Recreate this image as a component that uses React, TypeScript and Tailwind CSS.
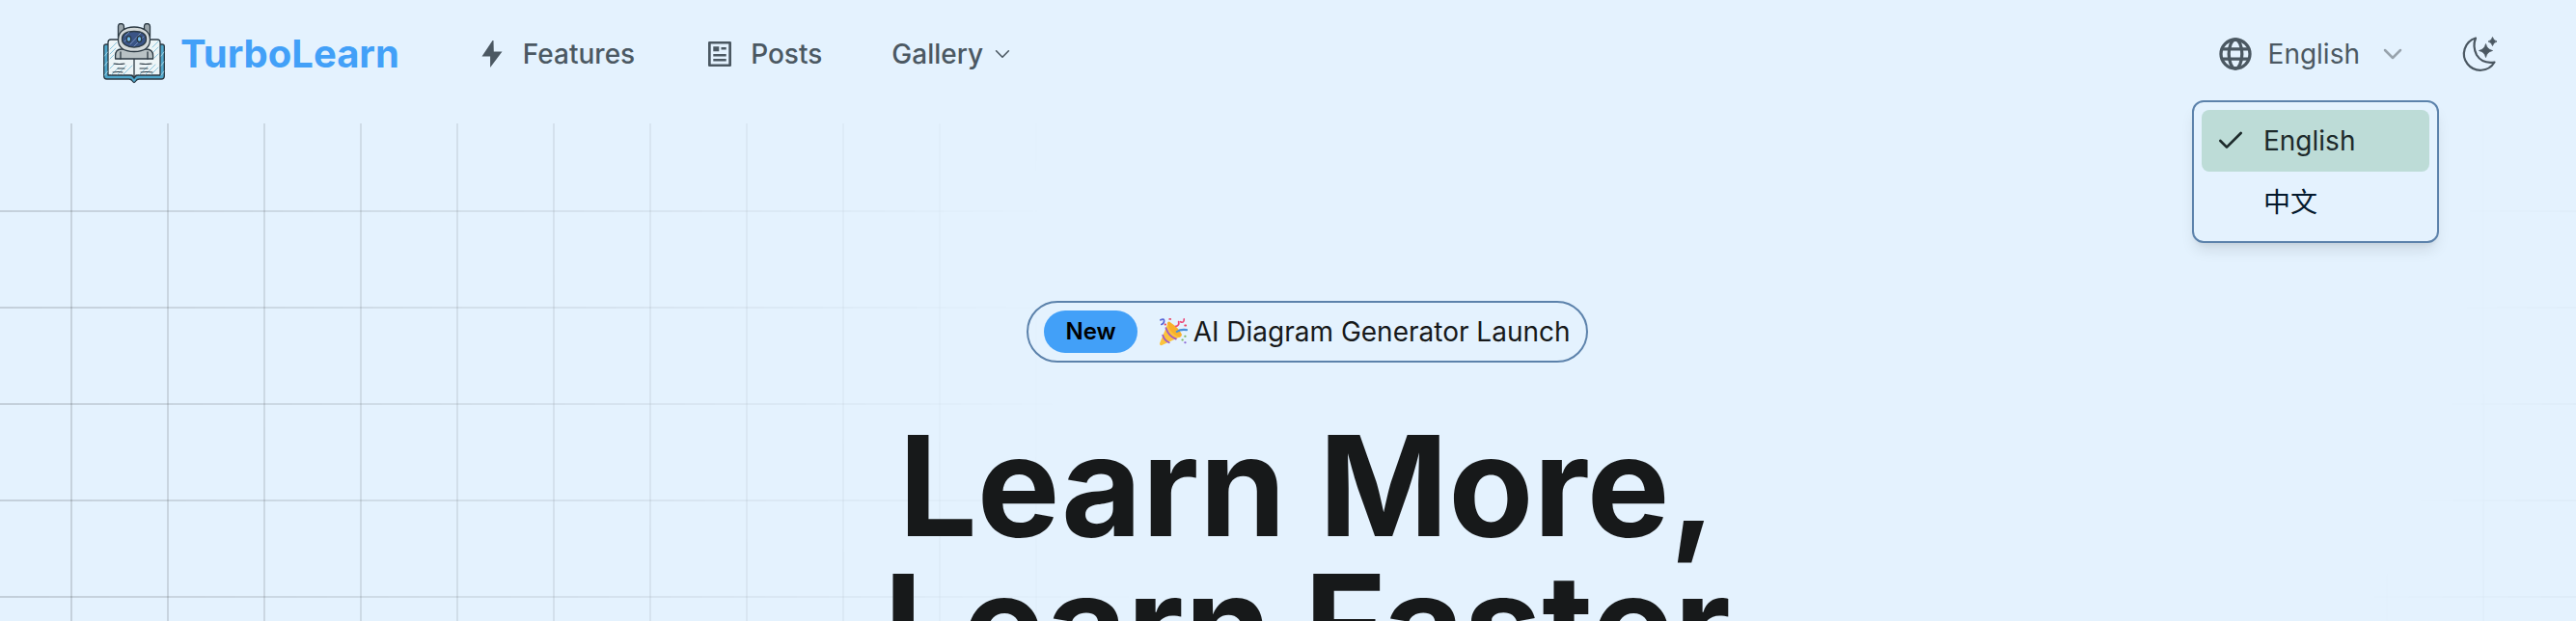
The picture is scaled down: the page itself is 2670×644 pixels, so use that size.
import React from "react";
import { Check } from "lucide-react";

function RobotLogo() {
  return (
    <svg viewBox="0 0 64 64" className="size-16" aria-hidden="true" fill="none" stroke="#2b3943" strokeWidth="1.3" strokeLinejoin="round" strokeLinecap="round">
      <path d="M3 22q-2.300 0-2.300 2v31q0 3 3 3h23q2.500 0 3.500 2 1.800 3 3.600 0 1-2 3.500-2h23q3 0 3-3V24q0-2-2.300-2z" fill="#4fa6ca" />
      <path d="M5 20q0-3 3-3h48q3 0 3 3v34H36q-3 0-4 3-1-3-4-3H5z" fill="#edf5f7" />
      <g stroke="#8cc6de" strokeWidth="1">
        <path d="M7 27l7-7M7 32l6-6M7 37l4-4M9 53l7-7M15 53l9-9M21 53l9-9M38 53l8-8M44 53l10-10M50 53l7-7M51 25l6-6M52 30l5-5M53 36l4-4M7 47l5-5" />
      </g>
      <path d="M1.500 34l3-4M1.500 44l3-4M1.500 54l3-4M60 34l3-4M60 44l3-4M60 54l3-4" stroke="#b4dbe9" strokeWidth="0.800" />
      <path d="M32 37v19" />
      <path d="M12.600 37v-3q0-7 6-7h26q7 0 7 7v3z" fill="#b9c2c5" />
      <path d="M18 30v7M46 30v7" />
      <path d="M15.500 15V3.500q0-3 3-3t3 3V10zM42.500 10V3.500q0-3 3-3t3 3V15z" fill="#9aa5ab" />
      <path d="M32 4C42 4 48.500 9 48.500 17S43 29.500 32 29.500 15.500 25 15.500 17 22 4 32 4z" fill="#d3d9da" />
      <path d="M32 8.500c8 0 12.500 2.500 12.500 8S39 25 32 25s-12.500-3-12.500-8.500S24 8.500 32 8.500z" fill="#3a5486" />
      <path d="M23 13l4-4M28 22l11-12M32 24l10-10M22 19l2-2" stroke="#7c96be" strokeWidth="0.900" />
      <ellipse cx="26.500" cy="16.500" rx="2.200" ry="3" fill="#75bff0" />
      <ellipse cx="37.500" cy="16.500" rx="2.200" ry="3" fill="#75bff0" />
      <path d="M11 42q6 1 11 0M15 47h7M10 51q6-1 10 0M38 42q6 1 12 0M38 47h8M39 51q6-1 12 0M30 54l2 3 2-3" strokeWidth="1.100" />
    </svg>
  );
}

function BoltIcon() {
  return (
    <svg viewBox="0 0 32 32" className="size-8" aria-hidden="true" fill="currentColor">
      <path d="M16.500 2 5.500 18.500h8.600V30L26.500 13.600h-8.700L17.500 2z" />
    </svg>
  );
}

function PostIcon() {
  return (
    <svg viewBox="0 0 32 32" className="size-8" aria-hidden="true" fill="currentColor">
      <path fillRule="evenodd" d="M5.300 3h21.400Q28 3 28 4.300v23.400q0 1.300-1.300 1.300H5.300Q4 29 4 27.700V4.300Q4 3 5.300 3zm1.400 2.600v20.800h18.600V5.600z" />
      <path d="M9.300 8.300h6v5h-6zM17.500 9h5.200v2.500h-5.200zM9.300 16h13.400v2.600H9.300zM9.300 21h13.400v2.600H9.300z" />
    </svg>
  );
}

function GlobeIcon() {
  return (
    <svg viewBox="0 0 36 36" className="size-9" aria-hidden="true" fill="none" stroke="currentColor" strokeWidth="3.300">
      <circle cx="18" cy="18" r="15" />
      <ellipse cx="18" cy="18" rx="6.800" ry="15" />
      <path d="M4 12.800h28M4 23.200h28" />
    </svg>
  );
}

function MoonIcon() {
  return (
    <svg viewBox="0 0 40 40" className="size-10" aria-hidden="true">
      <path d="M16 3.500A17 17 0 1 0 35.500 28.500Q23 30.500 17 21 12.500 12 16 3.500z" fill="none" stroke="currentColor" strokeWidth="2.200" strokeLinejoin="round" />
      <path d="M26.500 9.500Q27.700 15.300 33.500 16.500 27.700 17.700 26.500 23.500 25.300 17.700 19.500 16.500 25.300 15.300 26.500 9.500zM33.500 2.500Q34.400 6.100 38 7 34.400 7.900 33.500 11.500 32.600 7.900 29 7 32.600 6.100 33.500 2.500z" fill="currentColor" stroke="currentColor" strokeWidth="0.800" strokeLinejoin="round" />
    </svg>
  );
}

function PartyIcon() {
  return (
    <svg viewBox="0 0 32 32" className="h-8 w-[30px]" aria-hidden="true" fill="none" strokeLinecap="round">
      <path d="M10 7 1 29q0 2.500 2.500 2L25 21Q14 18 10 7z" fill="#fcc33c" />
      <path d="M9.500 7Q10 3 13.500 6q9 6 12 13 0 3-3 3Q12 18 9.500 7z" fill="#f8b02b" />
      <path d="M8 12q3 9 11 12M4.500 20q2 6 7 8" stroke="#a35bbd" strokeWidth="2" />
      <path d="M2 3q4-2 4 1t-3 4" stroke="#5967d8" strokeWidth="1.800" />
      <path d="M19 10q4-1 3-5M24 5q4 2 4-3" stroke="#ec4b7b" strokeWidth="1.800" />
      <path d="M20 16q4-3 11-2" stroke="#4a90d9" strokeWidth="2.200" />
      <path d="M12 2h1M29 9h1M7 8h.5" stroke="#e94b6a" strokeWidth="2" />
      <path d="M26 25h.5M29 21h.5" stroke="#7bb661" strokeWidth="2" />
      <path d="M29 28h.5" stroke="#8d6bd8" strokeWidth="2" />
    </svg>
  );
}

function Chevron({ className }: { className: string }) {
  return (
    <svg viewBox="0 0 20 12" className={className} aria-hidden="true" fill="none" stroke="currentColor" strokeLinecap="round" strokeLinejoin="round">
      <path d="M2 2l8 8 8-8" />
    </svg>
  );
}

const languages = [
  { code: "en", label: "English", selected: true },
  { code: "zh", label: "中文", selected: false },
];

export default function App() {
  return (
    <div className="flex h-screen flex-col overflow-hidden bg-[#e4f2fe] font-['Inter','Noto_Sans_CJK_SC',sans-serif] text-[#17191a]">
      <header className="flex h-32 shrink-0 items-start justify-between pr-20 pl-[107px] text-[28px] leading-8 text-[#4b5862]">
        <div className="flex h-28 items-center">
          <a href="#home" className="flex items-center gap-4 text-[40px] leading-10 font-bold text-[#42a0f8]">
            <RobotLogo />
            TurboLearn
          </a>
          <nav className="ml-20 flex items-center gap-[72px] font-medium">
            <a href="#features" className="flex items-center gap-4">
              <BoltIcon />
              Features
            </a>
            <a href="#posts" className="flex items-center gap-4">
              <PostIcon />
              Posts
            </a>
            <button type="button" className="flex items-center gap-3">
              Gallery
              <Chevron className="h-[10px] w-4 stroke-2" />
            </button>
          </nav>
        </div>
        <div className="flex h-28 items-center gap-[60px]">
          <div className="relative">
            <button type="button" aria-haspopup="listbox" aria-expanded="true" className="flex items-center">
              <GlobeIcon />
              <span className="mr-6 ml-4">English</span>
              <Chevron className="h-3 w-5 stroke-[2.5] text-[#98a3ad]" />
            </button>
            <ul role="listbox" aria-label="Language" className="absolute top-[66px] -right-[38px] z-10 w-64 rounded-xl border-2 border-[#5c82ab] bg-[#e4f2fe] p-2 shadow-lg">
              {languages.map((language) => (
                <li
                  key={language.code}
                  role="option"
                  aria-selected={language.selected}
                  className={
                    language.selected
                      ? "flex h-16 items-center gap-5 rounded-lg bg-[#bddcd7] pl-4 text-[#1d2a2b]"
                      : "flex h-16 items-center gap-5 pl-4 text-[#04192c]"
                  }
                >
                  <span className="flex w-7 justify-center">{language.selected && <Check className="size-8 shrink-0" strokeWidth={2} />}</span>
                  {language.label}
                </li>
              ))}
            </ul>
          </div>
          <button type="button" aria-label="Toggle dark mode">
            <MoonIcon />
          </button>
        </div>
      </header>
      <main className="relative flex flex-1 flex-col items-center">
        <div className="absolute inset-0 bg-[linear-gradient(to_right,#00000024_2px,transparent_2px),linear-gradient(to_bottom,#00000024_2px,transparent_2px)] [mask-image:radial-gradient(circle_at_68%_20%,transparent_730px,black_1850px)] bg-[length:100px_100px] bg-[position:73px_90px]" />
        <div className="relative flex flex-col items-center pt-[184px] pl-10">
          <a href="#launch" className="flex h-16 items-center rounded-full border-2 border-[#5c82ab] px-4 text-[28px] leading-8">
            <span className="flex h-11 items-center rounded-full bg-[#42a0f8] px-[22px] text-2xl font-semibold text-black">New</span>
            <span className="ml-[22px] flex items-center gap-[6px]">
              <PartyIcon />
              AI Diagram Generator Launch
            </span>
          </a>
          <h1 className="mt-14 text-center text-[144px] leading-none font-bold">
            Learn More,
            <br />
            Learn Faster
          </h1>
        </div>
      </main>
    </div>
  );
}
